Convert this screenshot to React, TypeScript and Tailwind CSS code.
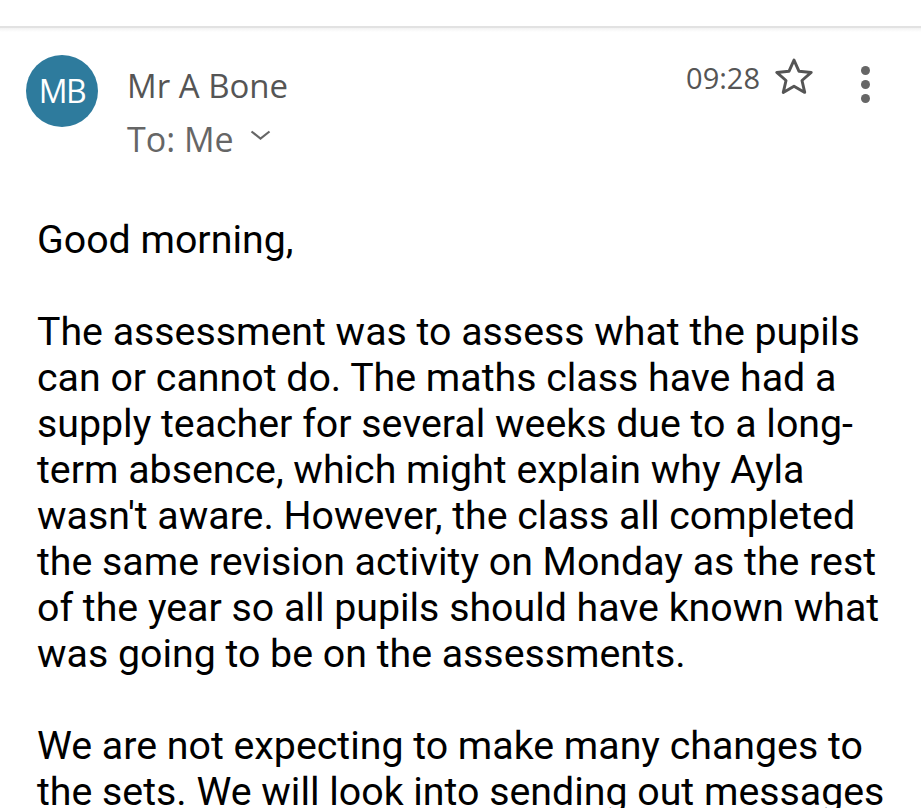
import React from "react";

export default function App() {
  return (
    <div className="w-[921px] h-[808px] overflow-hidden bg-white">
      <div className="h-[26px]" />
      <div className="h-[2px] bg-[#e2e2e2]" />
      <div className="h-[4px] bg-gradient-to-b from-[#f2f2f2] to-white" />
      <div className="flex pl-[26px] pr-[51px] pt-[24px]" style={{ fontFamily: '"Open Sans", sans-serif' }}>
        <div className="w-[72px] h-[72px] rounded-full bg-[#2e7b9d] flex items-center justify-center text-white text-[32px] mt-[-1px]">
          <span className="tracking-[-1.5px]">MB</span>
        </div>
        <div className="flex-1 ml-[29px]">
          <div className="text-[33px] text-[#555] leading-[44px] mt-[8px]">Mr A Bone</div>
          <div className="flex items-center text-[34px] text-[#666] leading-[44px] mt-[9px]">
            <span>To: Me</span>
            <svg width="21" height="10" viewBox="0 0 21 10" className="ml-[16px] mt-[-8px]">
              <path d="M1.5 1.5 L10.5 8.5 L19.5 1.5" fill="none" stroke="#666" strokeWidth="2.2" />
            </svg>
          </div>
        </div>
        <div className="flex items-start">
          <span className="text-[29px] text-[#555] leading-[40px] mt-[2px]">09:28</span>
          <svg width="44" height="44" viewBox="0 0 24 24" className="ml-[12px] mt-[-1px]">
            <path d="M12 2.8l2.75 6.1 6.65.6-5.05 4.4 1.5 6.5L12 17l-5.85 3.4 1.5-6.5L2.6 9.5l6.65-.6z" fill="none" stroke="#555" strokeWidth="1.6" strokeLinejoin="round" />
          </svg>
          <div className="flex flex-col gap-[5px] ml-[45px] mt-[10px]">
            <div className="w-[9px] h-[9px] rounded-full bg-[#666]" />
            <div className="w-[9px] h-[9px] rounded-full bg-[#666]" />
            <div className="w-[9px] h-[9px] rounded-full bg-[#666]" />
          </div>
        </div>
      </div>
      <div className="pl-[37px] mt-[56px] text-[39.3px] leading-[46px] text-black whitespace-nowrap" style={{ fontFamily: 'Roboto, sans-serif' }}>
        <p>Good morning,</p>
        <p className="mt-[46px]">
          The assessment was to assess what the pupils<br />
          can or cannot do. The maths class have had a<br />
          supply teacher for several weeks due to a long-<br />
          term absence, which might explain why Ayla<br />
          wasn't aware. However, the class all completed<br />
          the same revision activity on Monday as the rest<br />
          of the year so all pupils should have known what<br />
          was going to be on the assessments.
        </p>
        <p className="mt-[46px]">
          We are not expecting to make many changes to<br />
          the sets. We will look into sending out messages
        </p>
      </div>
    </div>
  );
}
